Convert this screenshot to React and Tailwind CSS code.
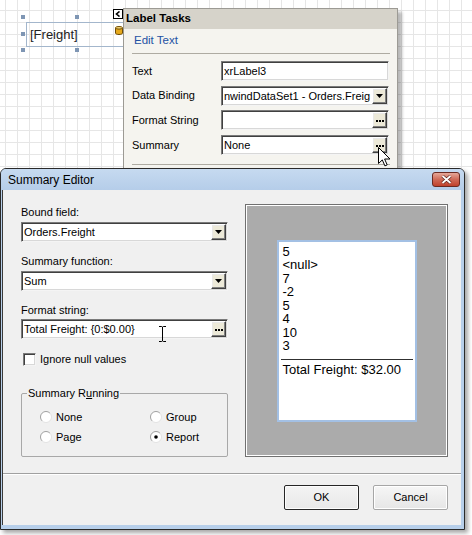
import React from "react";

const sunken =
  "border border-t-[#7a7a7a] border-l-[#7a7a7a] border-b-[#f4f4f4] border-r-[#f4f4f4] shadow-[inset_1px_1px_0_#404040,inset_-1px_-1px_0_#d8d8d8] bg-white";
const raised =
  "border border-t-white border-l-white border-b-[#404040] border-r-[#404040] shadow-[inset_-1px_-1px_0_#808080,inset_1px_1px_0_#e8e8e8] bg-[#ece9d8]";

const DropArrow = () => (
  <svg width="7" height="4" viewBox="0 0 7 4">
    <path d="M0 0h7L3.5 4z" fill="#000" />
  </svg>
);

const Dots = () => (
  <span className="flex gap-[1px] mt-[2px]">
    <span className="w-[2px] h-[2px] bg-black" />
    <span className="w-[2px] h-[2px] bg-black" />
    <span className="w-[2px] h-[2px] bg-black" />
  </span>
);

const Field = ({ value, button, className = "" }) => (
  <div className={`${sunken} h-[20px] flex items-stretch p-px ${className}`}>
    <span className="flex-1 pl-[1px] leading-[16px] whitespace-nowrap overflow-hidden">{value}</span>
    {button && (
      <span className={`${raised} w-[15px] flex items-center justify-center`}>
        {button === "drop" ? <DropArrow /> : <Dots />}
      </span>
    )}
  </div>
);

const Radio = ({ checked, label }) => (
  <div className="flex items-center gap-[4px] h-[12px]">
    <svg width="12" height="12" viewBox="0 0 12 12">
      <circle cx="6" cy="6" r="5.5" fill="#fff" />
      <path d="M2.1 9.9A5.5 5.5 0 0 1 9.9 2.1" stroke="#a0a0a0" fill="none" />
      <path d="M9.9 2.1A5.5 5.5 0 0 1 2.1 9.9" stroke="#e2e2e2" fill="none" />
      {checked && <circle cx="6" cy="6" r="1.8" fill="#000" />}
    </svg>
    <span className="leading-[13px]">{label}</span>
  </div>
);

const Handle = ({ className }) => <div className={`absolute w-[4px] h-[4px] bg-[#7f96b4] ${className}`} />;

const previewLines = ["5", "<null>", "7", "-2", "5", "4", "10", "3"];

const panelRows = [
  { label: "Text", value: "xrLabel3" },
  { label: "Data Binding", value: "nwindDataSet1 - Orders.Freig", button: "drop" },
  { label: "Format String", value: "", button: "dots" },
  { label: "Summary", value: "None", button: "dots" },
];

export default function App() {
  return (
    <div className="relative w-[472px] h-[535px] overflow-hidden bg-white text-[11px] text-black font-['Liberation_Sans',Arial,sans-serif]">
      {/* designer surface */}
      <div className="absolute inset-x-0 top-0 h-[168px] bg-[linear-gradient(to_right,#e6e6e6_1px,transparent_1px),linear-gradient(to_bottom,#e6e6e6_1px,transparent_1px)] bg-[size:12px_12px] bg-[position:5px_10px]" />

      {/* selected label control */}
      <div className="absolute left-[26px] top-[22px] w-[98px] h-[25px] border border-[#a3b6cc] pl-[3px] text-[13px] leading-[23px] text-[#222]">
        [Freight]
      </div>
      <Handle className="left-[21px] top-[15px]" />
      <Handle className="left-[75px] top-[15px]" />
      <Handle className="left-[21px] top-[32px]" />
      <Handle className="left-[21px] top-[48px]" />
      <Handle className="left-[75px] top-[48px]" />
      <svg className="absolute left-[115px] top-[26px]" width="8" height="9" viewBox="0 0 8 9">
        <path d="M0.5 1.8v5.4c0 .7 1.6 1.3 3.5 1.3s3.5-.6 3.5-1.3V1.8" fill="#e6a91c" stroke="#6e4c08" />
        <ellipse cx="4" cy="1.8" rx="3.5" ry="1.3" fill="#f7d878" stroke="#6e4c08" />
      </svg>

      {/* smart tag button */}
      <div className="absolute left-[113px] top-[9px] w-[10px] h-[10px] border border-black bg-white flex items-center justify-center">
        <svg width="6" height="6" viewBox="0 0 6 6">
          <path d="M4.5 0.5L1.5 3l3 2.5" stroke="#000" strokeWidth="1.6" fill="none" />
        </svg>
      </div>

      {/* Label Tasks panel */}
      <div className="absolute left-[123px] top-[8px] w-[275px] h-[200px] border border-[#9c9a94] bg-[#f5f4ef] shadow-[4px_4px_3px_rgba(0,0,0,0.28)]">
        <div className="h-[20px] bg-[#d6d3ca] flex items-center pl-[2px] font-bold text-[11.5px]">Label Tasks</div>
        <div className="pl-[8px] pr-[7px]">
          <div className="pt-[4px] pl-[2px] text-[11.5px] leading-[14px] text-[#2452a4]">Edit Text</div>
          <div className="mt-[6px] h-px bg-[#aeaba2]" />
          <div className="mt-[7px] flex flex-col gap-[4.7px]">
            {panelRows.map((r) => (
              <div key={r.label} className="flex items-center h-[20px]">
                <span className="w-[89px]">{r.label}</span>
                <Field className="w-[168px]" value={r.value} button={r.button} />
              </div>
            ))}
          </div>
          <div className="mt-[9px] h-px bg-[#aeaba2]" />
        </div>
      </div>

      {/* mouse pointer */}
      <svg className="absolute left-[378px] top-[147px]" width="13" height="20" viewBox="0 0 13 20">
        <path d="M0.5 0.5v16l3.8-3.6 2.6 6 2.3-1-2.6-5.9h5.4z" fill="#fff" stroke="#000" strokeLinejoin="round" />
      </svg>

      {/* Summary Editor dialog */}
      <div className="absolute left-0 top-[168px] w-[465px] h-[362px] rounded-t-[6px] border border-[#2a2a2a] bg-[#b7cfea] flex flex-col shadow-[3px_3px_4px_rgba(0,0,0,0.35)]">
        <div className="h-[21px] flex items-center justify-between pl-[7px] pr-[4px] rounded-t-[5px] bg-[linear-gradient(to_bottom,#c6daf0,#b5cde9)]">
          <span className="text-[12px] text-black">Summary Editor</span>
          <div className="w-[28px] h-[15px] rounded-[3px] border border-[#6a2a22] bg-[linear-gradient(to_bottom,#e6a899,#cf6a57_50%,#c0412c)] flex items-center justify-center">
            <svg width="11" height="9" viewBox="0 0 11 9">
              <path d="M1.5 1l8 7M9.5 1l-8 7" stroke="#5a2018" strokeWidth="3.2" />
              <path d="M1.5 1l8 7M9.5 1l-8 7" stroke="#fff" strokeWidth="1.8" />
            </svg>
          </div>
        </div>

        <div className="flex-1 ml-px mr-[3px] mb-[4px] border-l border-[#3a3a3a] bg-[#f0f0f0] flex flex-col">
          <div className="h-[283px] flex pt-[14px] pl-[18px] gap-[17px]">
            <div className="w-[207px] flex flex-col">
              <span className="mt-[2px] leading-[13px]">Bound field:</span>
              <Field className="mt-[3px]" value="Orders.Freight" button="drop" />
              <span className="mt-[13px] leading-[13px]">Summary function:</span>
              <Field className="mt-[3px]" value="Sum" button="drop" />
              <span className="mt-[13px] leading-[13px]">Format string:</span>
              <div className="relative mt-[2px]">
                <Field value="Total Freight: {0:$0.00}" button="dots" />
                <svg className="absolute left-[138px] top-[7px]" width="7" height="16" viewBox="0 0 7 16">
                  <path d="M0 0.5h2.8l0.7 0.6 0.7-0.6H7M3.5 1v14M0 15.5h2.8l0.7-0.6 0.7 0.6H7" stroke="#000" fill="none" />
                </svg>
              </div>
              <label className="mt-[14px] flex items-center gap-[4px] pl-[2px]">
                <span className={`${sunken} w-[13px] h-[13px] block`} />
                <span className="leading-[13px]">Ignore null values</span>
              </label>
              <div className="relative mt-[27px] border border-[#a8a8a8] rounded-[2px] pt-[17px] pb-[13px] pl-[18px] grid grid-cols-[110px_1fr] gap-y-[8px]">
                <span className="absolute -top-[7px] left-[5px] px-[1px] bg-[#f0f0f0] leading-[13px]">
                  Summary R<span className="underline">u</span>nning
                </span>
                <Radio label="None" />
                <Radio label="Group" />
                <Radio label="Page" />
                <Radio label="Report" checked />
              </div>
            </div>

            <div className="w-[203px] h-[253px] border border-[#707070]">
              <div className="h-full border border-white bg-[#ababab] flex items-center justify-center">
                <div className="w-[140px] h-[182px] border-2 border-[#a3c0e4] bg-white pt-[3px] px-[2px] text-[13px] leading-[13.5px]">
                  <div className="pl-[2px]">
                    {previewLines.map((l, i) => (
                      <div key={i}>{l}</div>
                    ))}
                  </div>
                  <div className="mt-[6px] h-px bg-[#303030]" />
                  <div className="mt-[2px] pl-[2px] leading-[16px]">Total Freight: $32.00</div>
                </div>
              </div>
            </div>
          </div>

          <div className="h-px bg-[#a0a0a0] border-b border-white box-content" />

          <div className="flex justify-end gap-[14px] pt-[10px] pr-[13px]">
            <button className="w-[75px] h-[25px] border border-[#262626] rounded-[2px] bg-[linear-gradient(to_bottom,#f4f4f4,#e8e8e8)] shadow-[inset_0_0_0_1px_#fdfdfd] text-[11px]">
              OK
            </button>
            <button className="w-[75px] h-[25px] border border-[#a6a6a6] rounded-[2px] bg-[linear-gradient(to_bottom,#f6f6f6,#e6e6e6)] shadow-[inset_0_0_0_1px_#ffffff] text-[11px]">
              Cancel
            </button>
          </div>
        </div>
      </div>
    </div>
  );
}
